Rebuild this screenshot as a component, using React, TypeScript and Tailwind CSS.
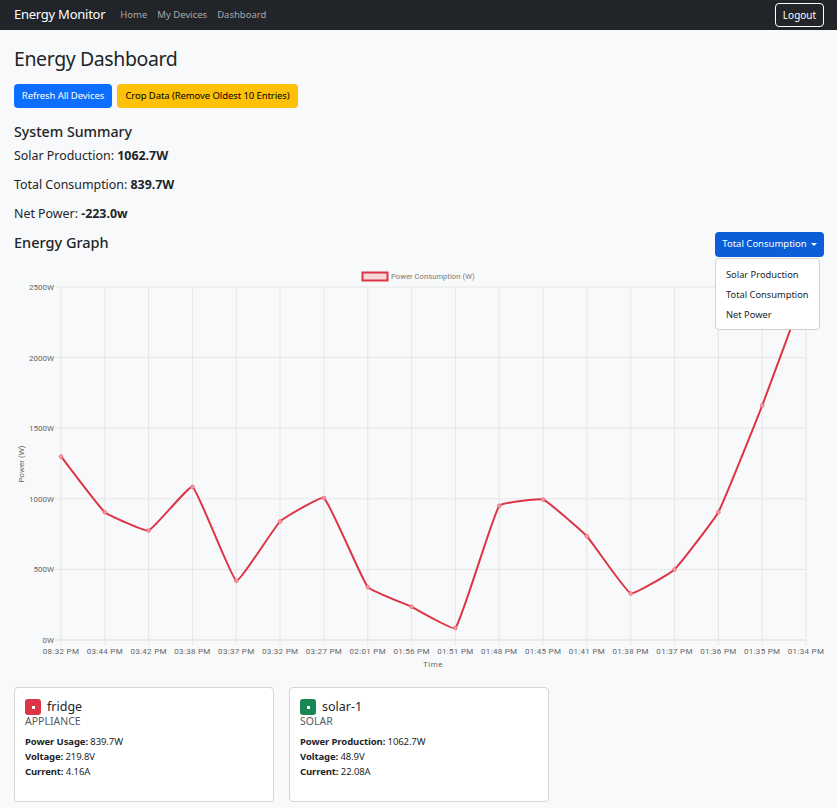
const labels = ['08:32 PM', '03:44 PM', '03:42 PM', '03:38 PM', '03:37 PM', '03:32 PM', '03:27 PM', '02:01 PM', '01:56 PM', '01:51 PM', '01:48 PM', '01:45 PM', '01:41 PM', '01:38 PM', '01:37 PM', '01:36 PM', '01:35 PM', '01:34 PM'];
const values = [1300, 905, 775, 1085, 420, 840, 1005, 375, 235, 85, 950, 995, 735, 330, 500, 905, 1660, 2500];
const ticks = [0, 500, 1000, 1500, 2000, 2500];

// chart area, in svg coordinates (svg starts at y=262)
const left = 61;
const right = 806;
const top = 25;
const bottom = 378;
const xAt = (i: number) => left + (i * (right - left)) / (labels.length - 1);
const yAt = (v: number) => bottom - (v / 2500) * (bottom - top);

// same spline the chart library uses, tension 0.1
const linePath = () => {
  const pts = values.map((v, i) => ({ x: xAt(i), y: yAt(v) }));
  const t = 0.1;
  const ctrl = pts.map((cur, i) => {
    const prev = pts[i - 1] ?? cur;
    const next = pts[i + 1] ?? cur;
    const d01 = Math.hypot(cur.x - prev.x, cur.y - prev.y);
    const d12 = Math.hypot(next.x - cur.x, next.y - cur.y);
    const s01 = d01 / (d01 + d12);
    const s12 = d12 / (d01 + d12);
    return {
      ax: cur.x - t * s01 * (next.x - prev.x),
      ay: cur.y - t * s01 * (next.y - prev.y),
      bx: cur.x + t * s12 * (next.x - prev.x),
      by: cur.y + t * s12 * (next.y - prev.y),
    };
  });
  let d = `M${pts[0].x} ${pts[0].y}`;
  for (let i = 1; i < pts.length; i++) {
    d += ` C${ctrl[i - 1].bx} ${ctrl[i - 1].by} ${ctrl[i].ax} ${ctrl[i].ay} ${pts[i].x} ${pts[i].y}`;
  }
  return d;
};

const EnergyChart = () => (
  <svg width="837" height="410" viewBox="0 0 837 410" className="block" style={{ fontFamily: 'Roboto, sans-serif' }}>
    {/* legend */}
    <rect x="362.5" y="10.5" width="25" height="8" fill="#f8d7da" stroke="#dc3545" strokeWidth="2" />
    <text x="391" y="17" fontSize="7.5" fill="#777" letterSpacing="0.1">Power Consumption (W)</text>

    {/* grid */}
    {ticks.map((v) => (
      <g key={v}>
        <line x1={left - 6} x2={right} y1={yAt(v)} y2={yAt(v)} stroke={v === 0 ? '#d9d9d9' : '#e6e6e6'} />
        <text x={left - 7} y={yAt(v) + 3} fontSize="8" fill="#666" textAnchor="end">{v}W</text>
      </g>
    ))}
    {labels.map((label, i) => (
      <g key={label + i}>
        <line x1={xAt(i)} x2={xAt(i)} y1={top} y2={bottom + 5} stroke="#e6e6e6" />
        <text x={xAt(i)} y={bottom + 14} fontSize="8" fill="#666" textAnchor="middle" letterSpacing="0.3">{label}</text>
      </g>
    ))}

    {/* axis titles */}
    <text x="433" y="405" fontSize="8" fill="#666" textAnchor="middle" letterSpacing="0.5">Time</text>
    <text transform="translate(24 202) rotate(-90)" fontSize="8" fill="#666" textAnchor="middle">Power (W)</text>

    {/* data */}
    <path d={linePath()} fill="none" stroke="#dc3545" strokeWidth="2" />
    {values.map((v, i) => (
      <circle key={i} cx={xAt(i)} cy={yAt(v)} r="2" fill="#eb98a0" stroke="#e4606d" strokeWidth="0.5" />
    ))}
  </svg>
);

const DeviceCard = ({ name, type, color, powerLabel, power, voltage, current }: { name: string; type: string; color: string; powerLabel: string; power: string; voltage: string; current: string }) => (
  <div className="w-[260px] h-[115px] bg-white border border-[#d2d4d6] rounded-[4px] pl-[10px] pt-[10px]">
    <div className="flex items-center h-[18px]">
      <span className={`w-4 h-4 rounded-[3px] flex items-center justify-center ${color}`}>
        <span className="w-[3px] h-[3px] bg-white" />
      </span>
      <span className="ml-[6px] text-[12.5px] text-[#212529]">{name}</span>
    </div>
    <div className="text-[10.5px] leading-[15px] -mt-[2px] text-[#555b61]">{type}</div>
    <div className="mt-[5px] text-[9.5px] leading-[15px] text-[#212529] tracking-[-0.1px]">
      <div><b>{powerLabel}:</b> {power}</div>
      <div><b>Voltage:</b> {voltage}</div>
      <div><b>Current:</b> {current}</div>
    </div>
  </div>
);

export default function App() {
  return (
    <div className="h-[808px] overflow-hidden bg-[#f8f9fa] text-[#212529] font-['Noto_Sans',sans-serif]">
      <nav className="h-[30px] bg-[#212529] flex items-center pl-[14px] pr-[13px]">
        <span className="text-[13px] tracking-[-0.25px] text-white">Energy Monitor</span>
        <div className="ml-[15px] flex gap-[10px] text-[9.5px] text-[#a6a8aa]">
          <span>Home</span>
          <span>My Devices</span>
          <span>Dashboard</span>
        </div>
        <button className="ml-auto w-[49px] h-[24px] border border-white rounded-[4px] text-[10px] text-white">Logout</button>
      </nav>

      <main className="relative px-[14px]">
        <h2 className="pt-[15px] text-[19.5px] tracking-[-0.4px] leading-[27px]">Energy Dashboard</h2>
        <div className="mt-[12px] flex gap-[5px] text-[9.5px] tracking-[-0.08px]">
          <button className="w-[98px] h-[24px] bg-[#0d6efd] text-white rounded-[4px]">Refresh All Devices</button>
          <button className="w-[181px] h-[24px] bg-[#ffc107] text-black rounded-[4px]">Crop Data (Remove Oldest 10 Entries)</button>
        </div>

        <h4 className="mt-[14px] text-[14.2px] leading-[20px] font-medium">System Summary</h4>
        <div className="text-[12.4px] leading-[29px] mt-[-1px]">
          <p>Solar Production: <b>1062.7W</b></p>
          <p>Total Consumption: <b>839.7W</b></p>
          <p>Net Power: <b>-223.0w</b></p>
        </div>

        <div className="flex items-center justify-between h-[33px] -mr-px">
          <h4 className="text-[14.5px] leading-[20px] font-medium -mt-[5px]">Energy Graph</h4>
          <button className="w-[109px] h-[25px] bg-[#0b5ed7] text-white rounded-[4px] text-[9.5px] flex items-center justify-center gap-[4px]">
            Total Consumption
            <span className="border-x-[3px] border-x-transparent border-t-[3px] border-t-white" />
          </button>
        </div>

        <div className="-mx-[14px] mt-[1px]">
          <EnergyChart />
        </div>

        <div className="flex gap-[15px] mt-[15px]">
          <DeviceCard name="fridge" type="APPLIANCE" color="bg-[#dc3545]" powerLabel="Power Usage" power="839.7W" voltage="219.8V" current="4.16A" />
          <DeviceCard name="solar-1" type="SOLAR" color="bg-[#198754]" powerLabel="Power Production" power="1062.7W" voltage="48.9V" current="22.08A" />
        </div>

        {/* open dropdown sits over the chart */}
        <div className="absolute left-[715px] top-[228px] w-[105px] h-[72px] bg-white border border-[#cfd1d3] rounded-[4px] pt-[6px] text-[9.3px] text-[#212529]">
          <div className="h-[20px] leading-[20px] pl-[10px]">Solar Production</div>
          <div className="h-[20px] leading-[20px] pl-[10px]">Total Consumption</div>
          <div className="h-[20px] leading-[20px] pl-[10px]">Net Power</div>
        </div>
      </main>
    </div>
  );
}
